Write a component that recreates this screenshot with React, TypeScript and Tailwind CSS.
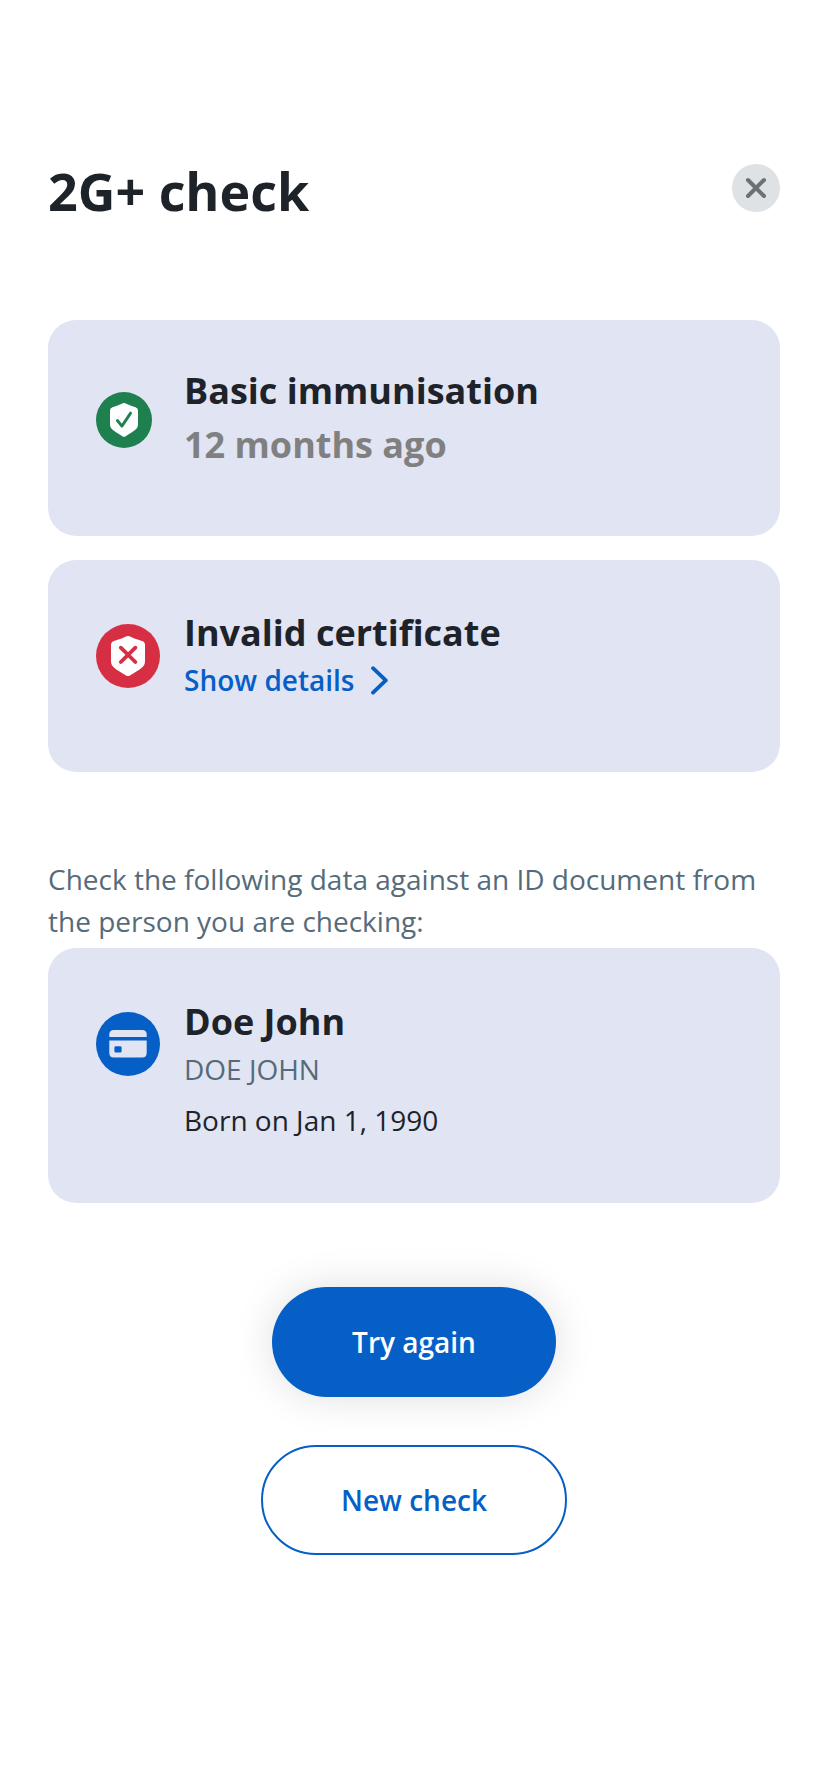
import type { ReactNode } from "react";

const shield =
  "M3 5.2C8.2 3.9 12.2 2.2 15.5 .6Q17 0 18.5 .6C21.8 2.2 25.8 3.9 31 5.2Q34 6.2 34 9V25.5C34 31.4 29.5 33.2 19 39.7Q17 40.9 15 39.7C4.5 33.2 0 31.4 0 25.5V9Q0 6.2 3 5.2Z";

function ValidIcon() {
  return (
    <svg className="block size-14" viewBox="0 0 56 56" fill="none">
      <circle cx="28" cy="28" r="28" fill="#1e7f4f" />
      <path transform="translate(14 10.8) scale(.8235 .84)" d={shield} fill="#fff" />
      <path
        d="M21.4 28.5 25.9 34.1 34.6 21.1"
        stroke="#1e7f4f"
        strokeWidth="2.8"
        strokeLinecap="round"
        strokeLinejoin="round"
      />
    </svg>
  );
}

function InvalidIcon() {
  return (
    <svg className="block size-16" viewBox="0 0 64 64" fill="none">
      <circle cx="32" cy="32" r="32" fill="#d62f44" />
      <path transform="translate(15 11.7)" d={shield} fill="#fff" />
      <path d="M24.8 23.7 39.4 38M39.4 23.7 24.8 38" stroke="#d62f44" strokeWidth="3.8" strokeLinecap="round" />
    </svg>
  );
}

function IdIcon() {
  return (
    <svg className="block size-16" viewBox="0 0 64 64" fill="none">
      <circle cx="32" cy="32" r="32" fill="#065fc7" />
      <path d="M13.3 25V22.6Q13.3 18 17.9 18H46.1Q50.7 18 50.7 22.6V25Z" fill="#e1e4f3" />
      <path
        fillRule="evenodd"
        d="M13.3 28.6H50.7V41Q50.7 45.6 46.1 45.6H17.9Q13.3 45.6 13.3 41ZM19.8 34.2Q18.4 34.2 18.4 35.6V39.2Q18.4 40.6 19.8 40.6H24.2Q25.6 40.6 25.6 39.2V35.6Q25.6 34.2 24.2 34.2Z"
        fill="#e1e4f3"
      />
    </svg>
  );
}

function Card({ className, icon, children }: { className: string; icon: ReactNode; children: ReactNode }) {
  return (
    <section className={`flex items-start rounded-[28px] bg-[#e1e4f3] pl-12 ${className}`}>
      <div className="w-[88px] shrink-0">{icon}</div>
      <div className="flex flex-col">{children}</div>
    </section>
  );
}

export default function App() {
  return (
    <main className="flex h-[1792px] w-[828px] flex-col bg-white px-12 pt-[159px] font-['Open_Sans',sans-serif] text-[28px] leading-[42px] text-[#1d2329]">
      <header className="flex h-16 items-start justify-between">
        <h1 className="text-[52px] leading-[64px] font-bold">2G+ check</h1>
        <button aria-label="Close" className="mt-[5px] size-12 rounded-full bg-[#dee2e5]">
          <svg viewBox="0 0 48 48" className="block size-12" fill="none">
            <path d="M16 16 32 32M32 16 16 32" stroke="#6a7373" strokeWidth="4" strokeLinecap="round" />
          </svg>
        </button>
      </header>

      <Card className="mt-[97px] h-[216px] pt-11" icon={<div className="pt-7"><ValidIcon /></div>}>
        <h2 className="text-[36px] leading-[54px] font-bold">Basic immunisation</h2>
        <p className="text-[36px] leading-[54px] font-bold text-[#808080]">12 months ago</p>
      </Card>

      <Card className="mt-6 h-[212px] pt-[46px]" icon={<div className="pt-[18px]"><InvalidIcon /></div>}>
        <h2 className="text-[36px] leading-[54px] font-bold">Invalid certificate</h2>
        <a href="#details" className="-mt-px flex items-center gap-4 font-semibold text-[#065fc7]">
          Show details
          <svg viewBox="0 0 18 30" className="block h-[30px] w-[18px]" fill="none">
            <path d="M2 3.2 14.8 15.4 2 27.6" stroke="#065fc7" strokeWidth="3.8" strokeLinecap="round" strokeLinejoin="round" />
          </svg>
        </a>
      </Card>

      <p className="mt-[86px] text-[#566b7a]">
        Check the following data against an ID document from the person you are checking:
      </p>

      <Card className="mt-1.5 h-[255px] pt-[47px]" icon={<div className="pt-[17px]"><IdIcon /></div>}>
        <h2 className="text-[36px] leading-[54px] font-bold">Doe John</h2>
        <p className="-mt-px text-[#566b7a]">DOE JOHN</p>
        <p className="mt-[9px]">Born on Jan 1, 1990</p>
      </Card>

      <div className="mt-[84px] flex flex-col items-center gap-12">
        <button className="h-[110px] w-[284px] rounded-full bg-[#065fc7] font-semibold text-white shadow-[0_0_40px_rgba(0,0,0,0.13)]">
          Try again
        </button>
        <button className="h-[110px] w-[306px] rounded-full border-2 border-[#065fc7] font-semibold text-[#065fc7]">
          New check
        </button>
      </div>
    </main>
  );
}
